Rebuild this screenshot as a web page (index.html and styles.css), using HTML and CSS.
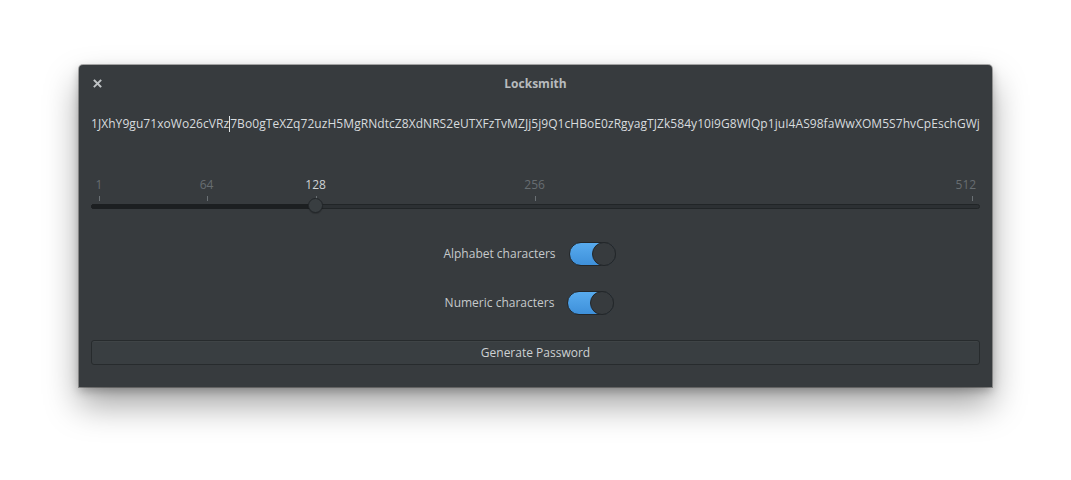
FILE: index.html
```html
<!DOCTYPE html>
<html>
<head>
<meta charset="utf-8">
<link rel="stylesheet" href="styles.css">
</head>
<body>
<div class="stage">
  <div class="window">
    <div class="titlebar">
      <span class="close">
        <svg width="9" height="9" viewBox="0 0 9 9"><path d="M1.5 1.5 L7.5 7.5 M7.5 1.5 L1.5 7.5" stroke="#bfc3c5" stroke-width="1.9" stroke-linecap="square"/></svg>
      </span>
      <span class="title">Locksmith</span>
      <span></span>
    </div>
    <div class="content">
      <div class="password">1JXhY9gu71xoWo26cVRz<span class="cursor"></span>7Bo0gTeXZq72uzH5MgRNdtcZ8XdNRS2eUTXFzTvMZJj5j9Q1cHBoE0zRgyagTJZk584y10i9G8WlQp1juI4AS98faWwXOM5S7hvCpEschGWj</div>
      <div class="scale">
        <div class="mark" style="left:8px"><span class="label">1</span><span class="tick"></span></div>
        <div class="mark" style="left:115.6px"><span class="label">64</span><span class="tick"></span></div>
        <div class="mark current" style="left:224.6px"><span class="label">128</span><span class="tick"></span></div>
        <div class="mark" style="left:443.6px"><span class="label">256</span><span class="tick"></span></div>
        <div class="mark end" style="left:881px"><span class="label">512</span><span class="tick"></span></div>
        <div class="trough"><div class="fill" style="width:224.6px"></div></div>
        <div class="knob" style="left:224.6px"></div>
      </div>
      <div class="options">
        <div class="option"><span class="opt-label">Alphabet characters</span><span class="switch"><span class="switch-knob"></span></span></div>
        <div class="option"><span class="opt-label">Numeric characters</span><span class="switch"><span class="switch-knob"></span></span></div>
      </div>
      <button class="generate">Generate Password</button>
    </div>
  </div>
</div>
</body>
</html>
```
FILE: styles.css
```css
html, body {
  margin: 0;
  background: #ffffff;
}
body {
  font-family: "Open Sans", "Noto Sans", sans-serif;
  font-size: 12px;
  color: #d4d8da;
  min-height: 480px;
}
.stage {
  padding: 65px 0 0 79px;
}
.window {
  width: 913px;
  height: 322px;
  background: #373b3e;
  border-radius: 4px 4px 0 0;
  box-shadow: 0 0 0 1px rgba(0,0,0,0.3), 0 18px 34px rgba(0,0,0,0.36), 0 4px 10px rgba(0,0,0,0.25);
  display: flex;
  flex-direction: column;
}
.titlebar {
  height: 36px;
  display: grid;
  grid-template-columns: 36px 1fr 36px;
  align-items: center;
}
.close {
  display: flex;
  justify-content: center;
  align-items: center;
  height: 36px;
}
.close svg { display: block; }
.title {
  text-align: center;
  font-weight: 700;
  color: #b8bcbe;
  line-height: 18px;
  padding-top: 2px;
}
.content {
  padding: 0 12px;
  display: flex;
  flex-direction: column;
}
.password {
  margin-top: 14px;
  line-height: 18px;
  white-space: nowrap;
  letter-spacing: 0.06px;
  color: #d8dcde;
}
.cursor {
  display: inline-block;
  width: 1px;
  height: 16px;
  background: #e0e4e6;
  vertical-align: -4px;
}
.scale {
  position: relative;
  margin-top: 42px;
  height: 50px;
}
.mark {
  position: absolute;
  top: 0;
  width: 0;
}
.mark .label {
  position: absolute;
  top: 1px;
  left: 0;
  transform: translateX(-50%);
  line-height: 18px;
  color: #676d71;
  white-space: nowrap;
}
.mark.end .label {
  transform: translateX(-80%);
}
.mark.current .label {
  color: #cfd3d5;
}
.mark .tick {
  position: absolute;
  top: 21px;
  left: 0;
  width: 1px;
  height: 5px;
  background: #6a7074;
}
.trough {
  position: absolute;
  top: 29px;
  left: 0;
  right: 0;
  height: 3px;
  border: 1px solid #212527;
  background: #2c3033;
  border-radius: 3px;
}
.trough .fill {
  height: 100%;
  background: #1c1f21;
  border-radius: 3px 0 0 3px;
  margin: -1px 0 0 -1px;
  border: 1px solid #1c1f21;
}
.knob {
  position: absolute;
  top: 23px;
  width: 13px;
  height: 13px;
  margin-left: -7.5px;
  border-radius: 50%;
  background: #393e41;
  border: 1px solid #222629;
  box-shadow: 0 1px 1px rgba(0,0,0,0.2);
}
.options {
  margin-top: 17px;
  display: flex;
  flex-direction: column;
  gap: 25px;
  padding-right: 12px;
}
.option {
  display: flex;
  justify-content: center;
  align-items: center;
  gap: 13px;
  height: 24px;
}
.opt-label {
  color: #c6cacc;
  line-height: 18px;
}
.switch {
  box-sizing: border-box;
  width: 47px;
  height: 24px;
  border-radius: 12px;
  border: 1px solid #23272a;
  background: linear-gradient(#58abee, #3e90da);
  display: flex;
  justify-content: flex-end;
  align-items: center;
}
.switch-knob {
  box-sizing: border-box;
  width: 24px;
  height: 24px;
  margin-right: -1px;
  border-radius: 50%;
  background: #373b3e;
  border: 1px solid #23272a;
}
.generate {
  margin-top: 25px;
  height: 25px;
  border: 1px solid #272b2d;
  border-radius: 3px;
  background: #393e41;
  color: #cdd1d3;
  font-family: inherit;
  font-size: 12px;
  padding: 0;
  box-shadow: inset 0 1px 0 rgba(255,255,255,0.03);
}
```
